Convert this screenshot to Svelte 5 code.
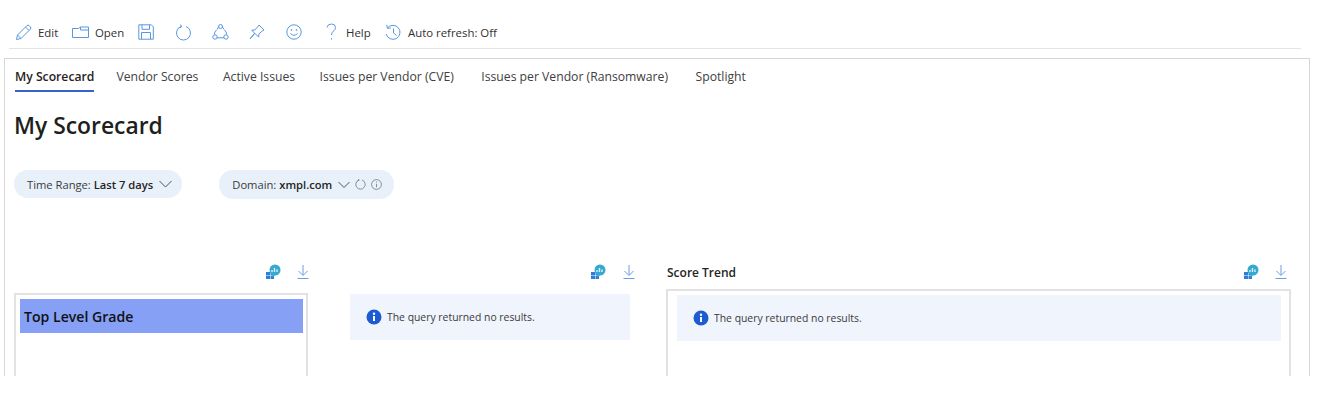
<script>
const tabs = [
  'My Scorecard',
  'Vendor Scores',
  'Active Issues',
  'Issues per Vendor (CVE)',
  'Issues per Vendor (Ransomware)',
  'Spotlight'
];
</script>

{#snippet tileActions()}
  <svg class="pin-tile" width="16" height="16" viewBox="0 0 16 16">
    <rect x="1" y="8" width="4" height="3" fill="#2f7fd8"/>
    <rect x="5.5" y="8" width="3.5" height="3" fill="#2f7fd8"/>
    <rect x="1" y="11.5" width="4" height="3.5" fill="#2f7fd8"/>
    <rect x="5.5" y="11.5" width="3.5" height="3.5" fill="#2f7fd8"/>
    <circle cx="10" cy="6" r="5.5" fill="#35a9cf"/>
    <path d="M10 11.5 L7 13 L8 10z" fill="#35a9cf"/>
    <path d="M7 8V6M9.5 8V4M12 8V5.5" stroke="#d8f0f8" stroke-width="1.4" fill="none"/>
  </svg>
  <svg class="download" width="14" height="16" viewBox="0 0 14 16" fill="none" stroke="#6d9be8" stroke-width="1">
    <path d="M7 1v10M2.5 7l4.5 4.5L11.5 7M1.500 14.500h11"/>
  </svg>
{/snippet}

{#snippet notice()}
  <svg width="16" height="16" viewBox="0 0 16 16">
    <circle cx="8" cy="8" r="7.500" fill="#1d5bd0"/>
    <rect x="7" y="7" width="2" height="5" fill="#fff"/>
    <circle cx="8" cy="4.700" r="1.200" fill="#fff"/>
  </svg>
  <span>The query returned no results.</span>
{/snippet}

<div class="page">
  <div class="toolbar">
    <div class="tool" style="width:57px">
      <svg width="17" height="17" viewBox="0 0 17 17"><path d="M1.500 15.500l1-4.500L12 1.500q1-.8 2 0l1.500 1.500q.8 1 0 2L6 14.500zM2.500 11l3.500 3.500M10.500 3l3.500 3.500"/></svg>
      <span>Edit</span>
    </div>
    <div class="tool" style="width:66px">
      <svg width="17" height="17" viewBox="0 0 17 17"><path d="M.5 4.500h6l2-1.500h8v10.500H.5zM8.500 3v3h8"/></svg>
      <span>Open</span>
    </div>
    <div class="tool" style="width:37px">
      <svg width="16" height="16" viewBox="0 0 16 16"><path d="M.8.8h12.500l2 2v12.400H.8zM4 .8v4.500h7.500V.8M3.500 15.200V8.500h9v6.700"/></svg>
    </div>
    <div class="tool" style="width:37px">
      <svg width="17" height="17" viewBox="0 0 17 17"><path d="M11 2.500a7 7 0 1 1-5 0M5.500 .5l1 2.500-2.800 .8"/></svg>
    </div>
    <div class="tool" style="width:37px">
      <svg width="17" height="17" viewBox="0 0 17 17"><path d="M5 5.500L7 2.200M12 5.500L10 2.200M2.300 10.500a6.500 6.500 0 0 1 2.200-4.500M14.700 10.500a6.500 6.500 0 0 0-2.200-4.500M5 13.800h7"/><circle cx="8.500" cy="2.500" r="2"/><circle cx="3" cy="13" r="2.200"/><circle cx="14" cy="13" r="2.200"/></svg>
    </div>
    <div class="tool" style="width:37px">
      <svg width="16" height="16" viewBox="0 0 16 16"><path d="M10 1l5 5-1.500 .8-3.500 3-.4 3.300L5.800 9.300 1 15l4.700-5.800L2.700 6.300l3.300-.4 3-3.500z"/></svg>
    </div>
    <div class="tool" style="width:39px">
      <svg width="16" height="16" viewBox="0 0 16 16"><circle cx="8" cy="8" r="7.200"/><path d="M4.500 9.500q3.500 3.500 7 0"/><circle cx="5.500" cy="6" r=".5"/><circle cx="10.500" cy="6" r=".5"/></svg>
    </div>
    <div class="tool help" style="width:60px">
      <svg width="13" height="18" viewBox="0 0 13 18"><path d="M2 4.500Q2.500 1 6.500 1q4 0 4 3.500 0 2-2 3.500-2 1.500-2 4M6.500 15v1.500"/></svg>
      <span>Help</span>
    </div>
    <div class="tool">
      <svg width="17" height="17" viewBox="0 0 17 17"><path d="M2.500 4a7 7 0 1 1-1.300 6M1.800 .8l.5 3.500 3.500-.3M8.500 4.500v4.500l3 2.500"/></svg>
      <span>Auto refresh: Off</span>
    </div>
  </div>

  <div class="panel">
    <nav class="tabs">
      {#each tabs as tab, i}
        <span class="tab" class:active={i === 0}>{tab}</span>
      {/each}
    </nav>

    <h1>My Scorecard</h1>

    <div class="filters">
      <div class="pill">
        <span>Time Range: <b>Last 7 days</b></span>
        <svg class="chev" width="13" height="8" viewBox="0 0 13 8"><path d="M.5 1l6 6 6-6"/></svg>
      </div>
      <div class="pill domain">
        <span>Domain: <b>xmpl.com</b></span>
        <svg class="chev" width="12" height="8" viewBox="0 0 12 8"><path d="M.5 1l5.500 5.500L11.500 1"/></svg>
        <svg class="small" width="11" height="11" viewBox="0 0 11 11"><path d="M7 1a4.700 4.700 0 1 1-3 0M3.500 0l.6 1.200-1.300.5"/></svg>
        <svg class="small" width="11" height="11" viewBox="0 0 11 11"><circle cx="5.500" cy="5.500" r="4.900"/><path d="M5.500 4.800v3.500M5.500 2.500v1"/></svg>
      </div>
    </div>

    <div class="tiles">
      <section class="tile first">
        <div class="tile-head">{@render tileActions()}</div>
        <div class="box">
          <div class="grade">Top Level Grade</div>
        </div>
      </section>

      <section class="tile second">
        <div class="tile-head">{@render tileActions()}</div>
        <div class="notice">{@render notice()}</div>
      </section>

      <section class="tile third">
        <div class="tile-head">
          <span class="tile-title">Score Trend</span>
          {@render tileActions()}
        </div>
        <div class="box trend">
          <div class="notice">{@render notice()}</div>
        </div>
      </section>
    </div>
  </div>
</div>

<style>
:global(body) {
  background: #fff;
}

.page {
  height: 376px;
  overflow: hidden;
  box-sizing: border-box;
  padding: 18px 18px 0 4px;
  font-family: "Open Sans", "Noto Sans", sans-serif;
  font-size: 12px;
  color: #323130;
}

.toolbar {
  display: flex;
  align-items: center;
  height: 28px;
  margin: 0 9px 0 5px;
  padding: 0 0 2px 6px;
  border-bottom: 1px solid #e4e4e4;
}

.tool {
  display: flex;
  align-items: center;
  gap: 6px;
  flex: none;
  font-size: 11.400px;
}

.tool svg {
  flex: none;
  fill: none;
  stroke: #5a97df;
  stroke-width: 1;
}

.help {
  gap: 8px;
}

.panel {
  margin-top: 9px;
  height: 320px;
  box-sizing: border-box;
  border: 1px solid #d6d6d6;
  border-bottom: 0;
  padding: 0 18px 0 9px;
}

.tabs {
  display: flex;
  gap: 24.500px;
  height: 33px;
  padding-left: 1px;
  font-size: 12.200px;
  align-items: flex-start;
}

.tab {
  padding-top: 9px;
  height: 22px;
  box-sizing: content-box;
  white-space: nowrap;
  color: #404040;
}

.tab:nth-child(5) {
  margin-left: 3px;
}

.tab:nth-child(6) {
  margin-left: 3px;
}

.active {
  color: #252423;
  font-weight: 600;
  border-bottom: 2px solid #3563c9;
  margin-right: -2.500px;
}

h1 {
  margin: 18px 0 0;
  font-size: 22.850px;
  line-height: 32px;
  font-weight: 600;
  color: #201f1e;
}

.filters {
  display: flex;
  gap: 37px;
  margin-top: 28px;
  align-items: flex-start;
}

.pill {
  display: flex;
  align-items: center;
  gap: 6px;
  height: 28px;
  padding: 0 10px 0 13px;
  border-radius: 14px;
  background: #e8f1fa;
  font-size: 11.200px;
  white-space: nowrap;
  color: #3b3a39;
}

.pill b {
  font-weight: 600;
  color: #252423;
}

.domain {
  height: 29px;
  gap: 5px;
  padding-right: 12px;
}

.chev {
  fill: none;
  stroke: #44546a;
  stroke-width: 1;
}

.domain .chev {
  margin-left: 1px;
}

.small {
  fill: none;
  stroke: #6b7785;
  stroke-width: .8;
}

.tiles {
  display: flex;
  margin-top: 58px;
}

.tile {
  flex: none;
}

.first {
  width: 294px;
  margin-right: 42px;
}

.second {
  width: 280px;
  margin-right: 36px;
}

.third {
  width: 625px;
}

.tile-head {
  display: flex;
  align-items: center;
  justify-content: flex-end;
  gap: 15px;
  height: 30px;
  padding-right: 3px;
  margin-bottom: 6px;
}

.first .tile-head {
  padding-right: 0;
  margin-right: -2px;
}

.second .tile-head {
  gap: 16px;
  padding-right: 0;
  margin-right: -6px;
  margin-bottom: 7px;
}

.third .tile-head {
  margin-bottom: 2px;
}

.tile-title {
  margin-right: auto;
  margin-left: 1px;
  font-size: 12px;
  font-weight: 600;
  color: #252423;
}

.box {
  height: 120px;
  box-sizing: border-box;
  border: 2px solid #e2e2e2;
  padding: 4px 3px 4px 4px;
}

.grade {
  display: flex;
  align-items: center;
  height: 34px;
  padding-left: 4px;
  background: #85a0f5;
  font-size: 14.100px;
  font-weight: 600;
  color: #111;
}

.notice {
  display: flex;
  align-items: center;
  gap: 5px;
  height: 46px;
  padding-left: 16px;
  background: #eff4fd;
  font-size: 10.400px;
  color: #3b3a39;
}

.trend {
  padding: 4px 8px 4px 9px;
}
</style>
